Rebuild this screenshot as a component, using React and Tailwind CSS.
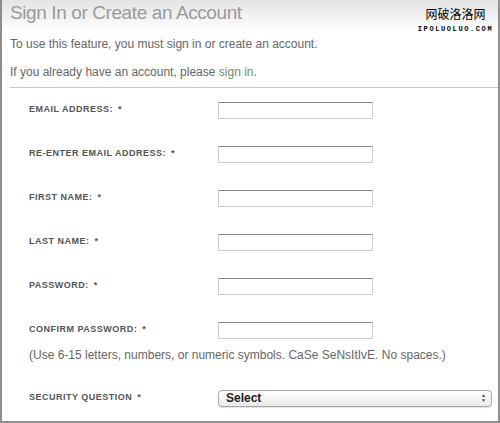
import React from "react";

const fields = [
  "EMAIL ADDRESS:",
  "RE-ENTER EMAIL ADDRESS:",
  "FIRST NAME:",
  "LAST NAME:",
  "PASSWORD:",
  "CONFIRM PASSWORD:",
];

function FieldRow({ label }) {
  return (
    <div className="flex h-[44px] items-center">
      <span className="w-[189px] text-[9px] font-bold tracking-[0.5px] text-[#555]">
        {label} <span className="ml-[2px]">*</span>
      </span>
      <div className="h-[17px] w-[155px] border border-[#cfcfcf] border-t-[#8a8a8a] bg-white"></div>
    </div>
  );
}

export default function App() {
  return (
    <div
      className="relative box-border flex h-[423px] w-[500px] flex-col border-b-2 border-l-2 border-r-2 border-[#8e8e8e] bg-white"
      style={{ fontFamily: '"Liberation Sans", Arial, sans-serif' }}
    >
      {/* HEADER */}
      <div className="h-[28px] bg-gradient-to-b from-[#e4e4e4] to-[#fcfcfc] pl-[8px]">
        <h1 className="text-[19px] leading-[25px] tracking-[-0.4px] text-[#9a9a9a]">
          Sign In or Create an Account
        </h1>
      </div>

      {/* watermark */}
      <div className="absolute right-[4px] top-[6px] flex w-[77px] flex-col items-center">
        <span
          className="text-[12px] leading-[16px] text-black"
          style={{ fontFamily: '"Noto Sans CJK SC", sans-serif' }}
        >
          网破洛洛网
        </span>
        <span className="mt-[4px] font-mono text-[7px] font-bold leading-[7px] tracking-[1.6px] text-black">
          IPOLUOLUO.COM
        </span>
      </div>

      <div className="pl-[8px] text-[12px] text-[#666]">
        <p className="mt-[9px] leading-[14px]">
          To use this feature, you must sign in or create an account.
        </p>
        <p className="mt-[14px] leading-[14px]">
          If you already have an account, please{" "}
          <span className="text-[#6f8f5f]">sign in</span>.
        </p>
      </div>

      <div className="ml-[8px] mt-[8px] h-px bg-[#c8c8c8]"></div>

      {/* FORM */}
      <div className="pl-[27px]">
        {fields.map((f) => (
          <FieldRow key={f} label={f} />
        ))}
        <p className="-mt-[4px] text-[12px] leading-[14px] text-[#666]">
          (Use 6-15 letters, numbers, or numeric symbols. CaSe SeNsItIvE. No spaces.)
        </p>
        <div className="mt-[14px] flex h-[44px] items-center">
          <span className="w-[189px] text-[9px] font-bold tracking-[0.5px] text-[#555]">
            SECURITY QUESTION <span className="ml-[2px]">*</span>
          </span>
          <div className="flex h-[17px] w-[274px] items-center justify-between rounded-[4px] border border-[#a8a8a8] bg-gradient-to-b from-white to-[#e9e9e9] pl-[7px] pr-[5px] shadow-[0_1px_1px_rgba(0,0,0,0.12)]">
            <span className="text-[12px] font-semibold text-[#222]">Select</span>
            <span className="flex flex-col text-[5px] leading-[5px] text-[#444]">
              <span>▲</span>
              <span>▼</span>
            </span>
          </div>
        </div>
      </div>
    </div>
  );
}
